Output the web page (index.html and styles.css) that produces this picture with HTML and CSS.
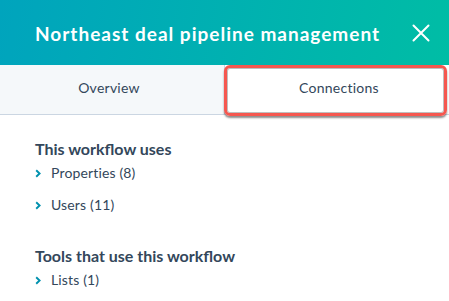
FILE: index.html
```html
<!DOCTYPE html>
<html lang="en">
<head>
<meta charset="utf-8">
<title>Northeast deal pipeline management</title>
<link rel="stylesheet" href="styles.css">
</head>
<body>
<div class="panel">
  <header class="panel-header">
    <h1 class="panel-title">Northeast deal pipeline management</h1>
    <button class="close-btn" aria-label="Close">
      <svg width="18" height="18" viewBox="0 0 18 18"><path d="M1.5 1.5 L16.5 16.5 M16.5 1.5 L1.5 16.5" stroke="#fff" stroke-width="2" stroke-linecap="round" fill="none"/></svg>
    </button>
  </header>
  <nav class="tabs">
    <div class="tab tab-first">Overview</div>
    <div class="tab tab-active">Connections</div>
    <div class="highlight"></div>
  </nav>
  <main class="content">
    <section class="section">
      <h2 class="section-title">This workflow uses</h2>
      <ul class="items">
        <li class="item"><span class="chev"><svg width="6" height="9" viewBox="0 0 6 9"><path d="M1.2 1.2 L4.6 4.5 L1.2 7.8" stroke="#0091ae" stroke-width="1.9" fill="none"/></svg></span>Properties (8)</li>
        <li class="item"><span class="chev"><svg width="6" height="9" viewBox="0 0 6 9"><path d="M1.2 1.2 L4.6 4.5 L1.2 7.8" stroke="#0091ae" stroke-width="1.9" fill="none"/></svg></span>Users (11)</li>
      </ul>
    </section>
    <section class="section section-second">
      <h2 class="section-title">Tools that use this workflow</h2>
      <ul class="items">
        <li class="item"><span class="chev"><svg width="6" height="9" viewBox="0 0 6 9"><path d="M1.2 1.2 L4.6 4.5 L1.2 7.8" stroke="#0091ae" stroke-width="1.9" fill="none"/></svg></span>Lists (1)</li>
      </ul>
    </section>
  </main>
</div>
</body>
</html>
```

FILE: styles.css
```css
* { box-sizing: border-box; }
html, body {
  margin: 0;
  padding: 0;
  background: #fff;
}
body {
  font-family: Lato, "Open Sans", sans-serif;
  color: #33475b;
  width: 449px;
  height: 301px;
  overflow: hidden;
}
.panel {
  display: flex;
  flex-direction: column;
}
.panel-header {
  height: 65px;
  display: flex;
  align-items: center;
  justify-content: space-between;
  padding: 0 19px 0 35px;
  background: linear-gradient(100deg, #00a4bd 0%, #00bda5 100%);
}
.panel-title {
  margin: 0;
  font-size: 19px;
  font-weight: 700;
  color: #fff;
  letter-spacing: 1px;
  padding-top: 2px;
}
.close-btn {
  background: none;
  border: 0;
  padding: 0;
  display: flex;
  width: 18px;
  height: 18px;
}
.tabs {
  position: relative;
  display: flex;
  height: 50px;
  border-bottom: 1px solid #cbd6e2;
}
.tab {
  flex: 0 0 224px;
  display: flex;
  align-items: center;
  justify-content: center;
  font-size: 14px;
  letter-spacing: 0.25px;
  background: #f5f8fa;
  color: #33475b;
  padding-bottom: 4px;
}
.tab-first {
  padding-right: 6px;
}
.tab-active {
  flex: 1 1 auto;
  background: #fff;
  border-left: 1px solid #cbd6e2;
  padding-left: 4px;
}
.highlight {
  position: absolute;
  left: 224px;
  top: 0;
  width: 223px;
  height: 51px;
  border: 3px solid #f5574f;
  border-radius: 6px;
  box-shadow: 0 2px 2px rgba(0, 0, 0, 0.45), inset 0 0 0 1px rgba(0, 0, 0, 0.25);
}
.content {
  padding: 24px 20px 0 35px;
}
.section-title {
  margin: 0;
  font-size: 16px;
  line-height: 20px;
  font-weight: 700;
  color: #33475b;
}
.items {
  list-style: none;
  margin: 4px 0 0;
  padding: 0;
  display: flex;
  flex-direction: column;
  gap: 12px;
}
.item {
  display: flex;
  align-items: center;
  font-size: 14px;
  line-height: 20px;
  letter-spacing: 0.15px;
  color: #33475b;
}
.chev {
  display: flex;
  width: 16px;
}
.section-second {
  margin-top: 31px;
}
```
